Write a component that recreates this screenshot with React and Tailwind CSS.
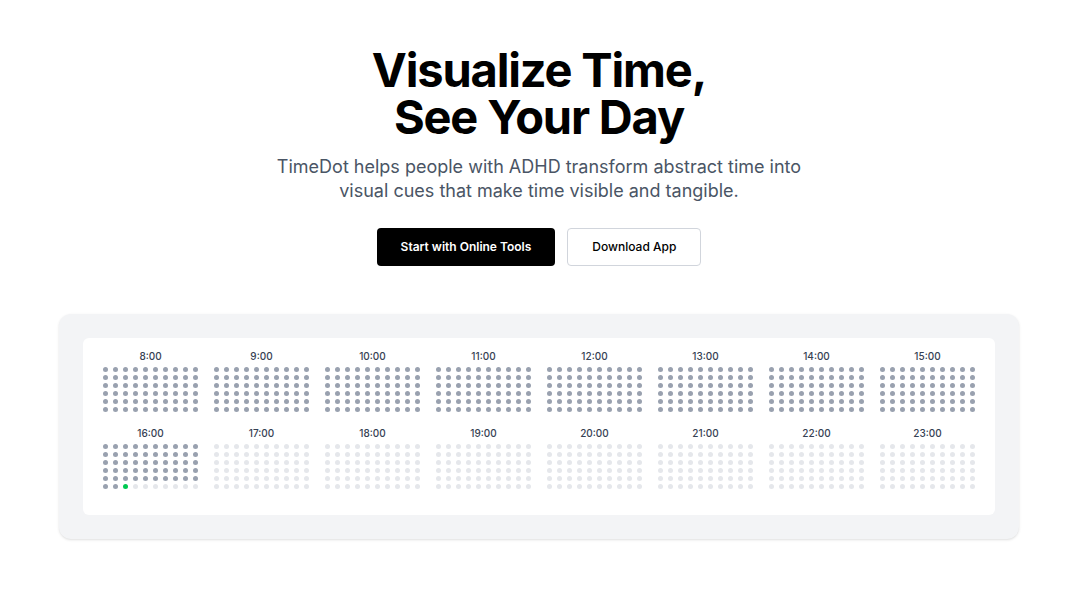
import React from "react";

const HOURS = [8, 9, 10, 11, 12, 13, 14, 15, 16, 17, 18, 19, 20, 21, 22, 23];
const NOW_HOUR = 16;
const NOW_MINUTE = 52;

function dotColor(hour, minute) {
  if (hour === NOW_HOUR && minute === NOW_MINUTE) return "bg-green-500";
  if (hour < NOW_HOUR || (hour === NOW_HOUR && minute < NOW_MINUTE)) return "bg-gray-400";
  return "bg-gray-200";
}

function HourBlock({ hour }) {
  return (
    <div className="flex flex-col">
      <div className="text-center text-[10px] leading-[15px] font-medium text-gray-700 mb-[3px]">
        {hour}:00
      </div>
      <div className="grid grid-cols-[repeat(10,5px)] justify-between gap-y-[3px]">
        {Array.from({ length: 60 }, (_, m) => (
          <span key={m} className={`w-[5px] h-[5px] rounded-full ${dotColor(hour, m)}`} />
        ))}
      </div>
    </div>
  );
}

export default function App() {
  return (
    <div className="min-h-screen bg-white font-['Inter',sans-serif] text-black">
      <section className="flex flex-col items-center pt-[46px] pr-1.5">
        <h1 className="text-center text-[47px] font-bold leading-[47px] tracking-tight">
          Visualize Time,
          <br />
          See Your Day
        </h1>
        <p className="mt-[15px] max-w-[560px] text-center text-lg leading-6 text-gray-600">
          TimeDot helps people with ADHD transform abstract time into visual cues that make time visible and tangible.
        </p>

        {/* Actions */}
        <div className="mt-[25px] flex gap-3">
          <button className="h-[38px] rounded bg-black px-6 text-xs font-semibold text-white">
            Start with Online Tools
          </button>
          <button className="h-[38px] rounded border border-gray-300 bg-white px-6 text-xs font-medium text-black">
            Download App
          </button>
        </div>

        {/* Day grid preview */}
        <div className="mt-12 w-[960px] rounded-xl bg-gray-100 p-6 shadow-sm">
          <div className="grid grid-cols-8 gap-x-4 gap-y-[14px] rounded-md bg-white px-5 pt-[11px] pb-[26px]">
            {HOURS.map((h) => (
              <HourBlock key={h} hour={h} />
            ))}
          </div>
        </div>
      </section>
    </div>
  );
}
